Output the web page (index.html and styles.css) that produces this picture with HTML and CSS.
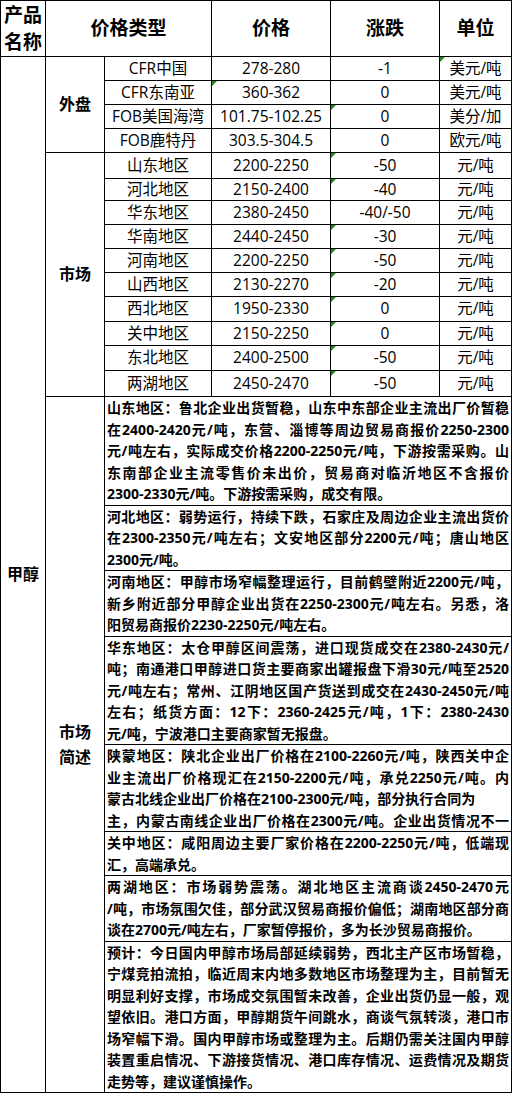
FILE: index.html
```html
<!DOCTYPE html>
<html lang="zh-CN">
<head>
<meta charset="utf-8">
<title>甲醇价格</title>
<link rel="stylesheet" href="styles.css">
</head>
<body>
<div class="sheet">
  <div class="c hd name">产品<br>名称</div>
  <div class="c hd">价格类型</div>
  <div class="c hd">价格</div>
  <div class="c hd">涨跌</div>
  <div class="c hd">单位</div>

  <div class="c lb prod">甲醇</div>
  <div class="c lb g-wp">外盘</div>
  <div class="c lb g-sc">市场</div>
  <div class="c lb g-ms">市场<br>简述</div>

  <div class="c">CFR中国</div><div class="c">278-280</div><div class="c">-1</div><div class="c tri">美元/吨</div>
  <div class="c">CFR东南亚</div><div class="c tri">360-362</div><div class="c">0</div><div class="c">美元/吨</div>
  <div class="c">FOB美国海湾</div><div class="c">101.75-102.25</div><div class="c tri">0</div><div class="c">美分/加</div>
  <div class="c">FOB鹿特丹</div><div class="c">303.5-304.5</div><div class="c">0</div><div class="c">欧元/吨</div>

  <div class="c">山东地区</div><div class="c">2200-2250</div><div class="c tri">-50</div><div class="c">元/吨</div>
  <div class="c">河北地区</div><div class="c">2150-2400</div><div class="c tri">-40</div><div class="c">元/吨</div>
  <div class="c">华东地区</div><div class="c">2380-2450</div><div class="c">-40/-50</div><div class="c">元/吨</div>
  <div class="c">华南地区</div><div class="c">2440-2450</div><div class="c tri">-30</div><div class="c">元/吨</div>
  <div class="c">河南地区</div><div class="c">2200-2250</div><div class="c tri">-50</div><div class="c">元/吨</div>
  <div class="c">山西地区</div><div class="c">2130-2270</div><div class="c tri">-20</div><div class="c">元/吨</div>
  <div class="c">西北地区</div><div class="c">1950-2330</div><div class="c tri">0</div><div class="c">元/吨</div>
  <div class="c">关中地区</div><div class="c">2150-2250</div><div class="c tri">0</div><div class="c">元/吨</div>
  <div class="c">东北地区</div><div class="c">2400-2500</div><div class="c tri">-50</div><div class="c">元/吨</div>
  <div class="c">两湖地区</div><div class="c">2450-2470</div><div class="c tri">-50</div><div class="c">元/吨</div>

  <div class="note">
    <div class="ln j">山东地区：鲁北企业出货暂稳，山东中东部企业主流出厂价暂稳</div>
    <div class="ln j">在2400-2420元/吨，东营、淄博等周边贸易商报价2250-2300</div>
    <div class="ln j">元/吨左右，实际成交价格2200-2250元/吨，下游按需采购。山</div>
    <div class="ln j">东南部企业主流零售价未出价，贸易商对临沂地区不含报价</div>
    <div class="ln">2300-2330元/吨。下游按需采购，成交有限。</div>
  </div>
  <div class="note">
    <div class="ln j">河北地区：弱势运行，持续下跌，石家庄及周边企业主流出货价</div>
    <div class="ln j">在2300-2350元/吨左右；文安地区部分2200元/吨；唐山地区</div>
    <div class="ln">2300元/吨。</div>
  </div>
  <div class="note">
    <div class="ln j">河南地区：甲醇市场窄幅整理运行，目前鹤壁附近2200元/吨，</div>
    <div class="ln j">新乡附近部分甲醇企业出货在2250-2300元/吨左右。另悉，洛</div>
    <div class="ln">阳贸易商报价2230-2250元/吨左右。</div>
  </div>
  <div class="note">
    <div class="ln j">华东地区：太仓甲醇区间震荡，进口现货成交在2380-2430元/</div>
    <div class="ln j">吨；南通港口甲醇进口货主要商家出罐报盘下滑30元/吨至2520</div>
    <div class="ln j">元/吨左右；常州、江阴地区国产货送到成交在2430-2450元/吨</div>
    <div class="ln j">左右；纸货方面：12下：2360-2425元/吨，1下：2380-2430</div>
    <div class="ln">元/吨，宁波港口主要商家暂无报盘。</div>
  </div>
  <div class="note">
    <div class="ln j">陕蒙地区：陕北企业出厂价格在2100-2260元/吨，陕西关中企</div>
    <div class="ln j">业主流出厂价格现汇在2150-2200元/吨，承兑2250元/吨。内</div>
    <div class="ln">蒙古北线企业出厂价格在2100-2300元/吨，部分执行合同为</div>
    <div class="ln j">主，内蒙古南线企业出厂价格在2300元/吨。企业出货情况不一</div>
  </div>
  <div class="note">
    <div class="ln j">关中地区：咸阳周边主要厂家价格在2200-2250元/吨，低端现</div>
    <div class="ln">汇，高端承兑。</div>
  </div>
  <div class="note">
    <div class="ln j">两湖地区：市场弱势震荡。湖北地区主流商谈2450-2470元</div>
    <div class="ln j">/吨，市场氛围欠佳，部分武汉贸易商报价偏低；湖南地区部分商</div>
    <div class="ln">谈在2700元/吨左右，厂家暂停报价，多为长沙贸易商报价。</div>
  </div>
  <div class="note">
    <div class="ln j">预计：今日国内甲醇市场局部延续弱势，西北主产区市场暂稳，</div>
    <div class="ln j">宁煤竞拍流拍，临近周末内地多数地区市场整理为主，目前暂无</div>
    <div class="ln j">明显利好支撑，市场成交氛围暂未改善，企业出货仍显一般，观</div>
    <div class="ln j">望依旧。港口方面，甲醇期货午间跳水，商谈气氛转淡，港口市</div>
    <div class="ln j">场窄幅下滑。国内甲醇市场或整理为主。后期仍需关注国内甲醇</div>
    <div class="ln j">装置重启情况、下游接货情况、港口库存情况、运费情况及期货</div>
    <div class="ln">走势等，建议谨慎操作。</div>
  </div>
</div>
</body>
</html>
```

FILE: styles.css
```css
html, body {
  margin: 0;
  padding: 0;
  background: #fff;
}

body {
  font-family: "Open Sans", "Noto Sans CJK SC", sans-serif;
  color: #000;
}

.sheet {
  width: 510px;
  display: grid;
  grid-template-columns: 44px 58px 106px 118px 108px 71px;
  grid-template-rows: 55px 23px 23px 23px 23px 25px 21px 23px 23px 23px 23px 24px 23px 24px 25px;
  grid-auto-rows: auto;
  gap: 1px;
  background: #000;
  border: 1px solid #000;
}

.c {
  background: #fff;
  display: flex;
  align-items: center;
  justify-content: center;
  text-align: center;
  font-size: 15.5px;
  line-height: 1;
  white-space: nowrap;
}

.hd {
  font-size: 19px;
  font-weight: 700;
}

.hd:nth-child(2) {
  grid-column: span 2;
}

.name {
  line-height: 27px;
}

.lb {
  font-size: 16px;
  font-weight: 700;
  line-height: 25px;
}

.prod {
  grid-column: 1;
  grid-row: 2 / span 22;
}

.g-wp {
  grid-column: 2;
  grid-row: 2 / span 4;
}

.g-sc {
  grid-column: 2;
  grid-row: 6 / span 10;
}

.g-ms {
  grid-column: 2;
  grid-row: 16 / span 8;
}

.tri {
  position: relative;
}

.tri::before {
  content: "";
  position: absolute;
  left: 0;
  top: 0;
  width: 0;
  height: 0;
  border-top: 5px solid #1c8c1c;
  border-right: 5px solid transparent;
}

.note {
  grid-column: 3 / span 4;
  background: #fff;
  padding: 0 2px 0 2px;
  font-size: 14px;
  font-weight: 700;
  line-height: 21.5px;
}

.ln {
  display: block;
  text-align: left;
  overflow: hidden;
}

.ln.j {
  text-align: justify;
  text-align-last: justify;
}
```
